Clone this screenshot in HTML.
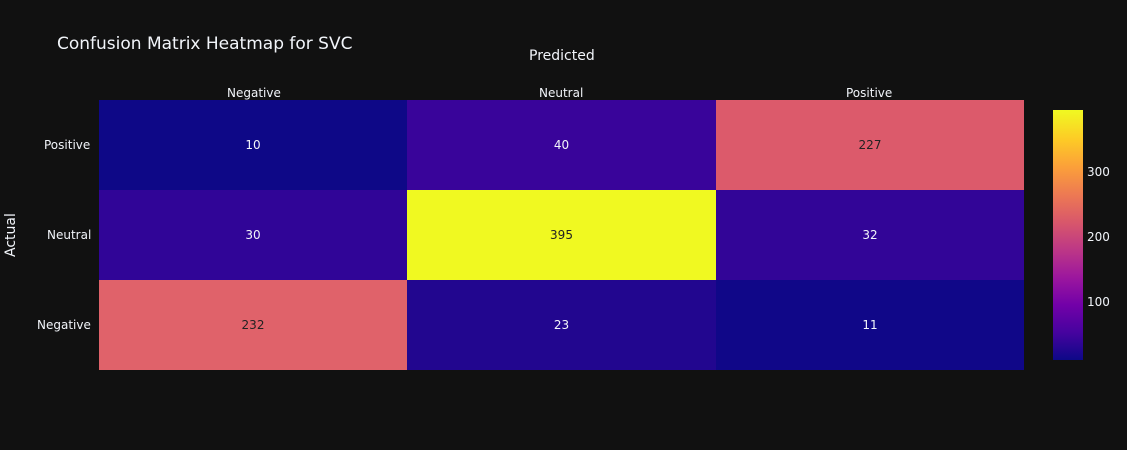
<!DOCTYPE html>
<html><head><style>
body{margin:0;width:1127px;height:450px;background:#111111;font-family:"DejaVu Sans","Liberation Sans",sans-serif;color:#f2f5fa;position:relative;overflow:hidden}
.a{position:absolute}
.c{position:absolute;display:flex;align-items:center;justify-content:center;font-size:12px}
.l{font-size:12px}
</style></head><body>
<div class="a" style="left:57px;top:34px;font-size:17px">Confusion Matrix Heatmap for SVC</div>
<div class="a" style="left:529px;top:48px;font-size:14px">Predicted</div>
<div class="a" style="font-size:14px;transform:rotate(-90deg);transform-origin:0 0;left:3px;top:257px">Actual</div>
<div class="a l" style="left:227px;top:86px">Negative</div>
<div class="a l" style="left:539px;top:86px">Neutral</div>
<div class="a l" style="left:846px;top:86px">Positive</div>
<div class="a l" style="left:44px;top:138px">Positive</div>
<div class="a l" style="left:47px;top:228px">Neutral</div>
<div class="a l" style="left:37px;top:318px">Negative</div>

<div class="c" style="left:99px;top:100px;width:308px;height:90px;background:#0e0887">10</div>
<div class="c" style="left:407px;top:100px;width:309px;height:90px;background:#39049a">40</div>
<div class="c" style="left:716px;top:100px;width:308px;height:90px;background:#dc5a6b;color:#222">227</div>
<div class="c" style="left:99px;top:190px;width:308px;height:90px;background:#300597">30</div>
<div class="c" style="left:407px;top:190px;width:309px;height:90px;background:#f0f921;color:#222">395</div>
<div class="c" style="left:716px;top:190px;width:308px;height:90px;background:#320597">32</div>
<div class="c" style="left:99px;top:280px;width:308px;height:90px;background:#e0626a;color:#222">232</div>
<div class="c" style="left:407px;top:280px;width:309px;height:90px;background:#22068f">23</div>
<div class="c" style="left:716px;top:280px;width:308px;height:90px;background:#100788">11</div>

<div class="a" style="left:1053px;top:110px;width:30px;height:250px;background:linear-gradient(to top,#0d0887 0%,#46039f 11%,#7201a8 22%,#9c179e 33%,#bd3786 44%,#d8576b 55%,#ed7953 66%,#fb9f3a 77%,#fdca26 88%,#f0f921 100%)"></div>
<div class="a l" style="left:1087px;top:165px">300</div>
<div class="a l" style="left:1087px;top:230px">200</div>
<div class="a l" style="left:1087px;top:295px">100</div>
</body></html>
